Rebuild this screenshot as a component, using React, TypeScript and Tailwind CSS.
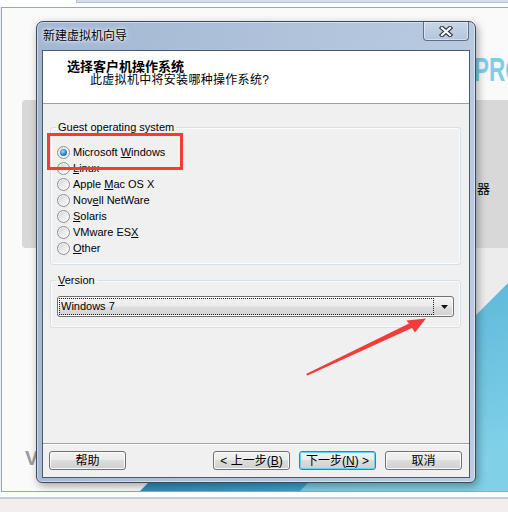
import type { ReactNode } from 'react'

const font = "font-['Liberation_Sans','Noto_Sans_CJK_SC',sans-serif]"

function Radio({ checked, children }: { checked?: boolean; children: ReactNode }) {
  return (
    <div className="flex h-[16px] items-center">
      <span className="flex h-[13px] w-[13px] items-center justify-center rounded-full border border-[#8e8f8f] bg-[linear-gradient(135deg,#cfcfcf,#f4f4f4_70%,#ffffff)] shadow-[inset_0_0_0_1px_#f6f6f6]">
        {checked && (
          <span className="h-[7px] w-[7px] rounded-full bg-[radial-gradient(circle_at_40%_35%,#a8dbf8,#2f80c4_55%,#174a82)]" />
        )}
      </span>
      <span className="ml-[3px] text-[11px] leading-[13px] text-black">{children}</span>
    </div>
  )
}

function Key({ children }: { children: ReactNode }) {
  return <span className="underline underline-offset-[1px]">{children}</span>
}

function Button({ children, focused }: { children: ReactNode; focused?: boolean }) {
  return (
    <button
      className={
        focused
          ? 'flex h-[19px] w-[77px] items-center justify-center rounded-[3px] border border-[#3c7fb1] bg-[linear-gradient(#f2f2f2,#ebebeb_45%,#dddddd_50%,#cfcfcf)] text-[12px] leading-none text-black shadow-[inset_0_0_0_1px_#62d2fa]'
          : 'flex h-[19px] w-[77px] items-center justify-center rounded-[3px] border border-[#707070] bg-[linear-gradient(#f2f2f2,#ebebeb_45%,#dddddd_50%,#cfcfcf)] text-[12px] leading-none text-black shadow-[inset_0_0_0_1px_#fbfbfb]'
      }
    >
      {children}
    </button>
  )
}

function Dialog() {
  return (
    <div className="absolute left-[36px] top-[21px] flex h-[462px] w-[440px] flex-col rounded-t-[7px] rounded-b-[6px] border border-[#3e4a5a] bg-[linear-gradient(100deg,#a2b7d3,#b3c5dc_60%,#bccde2)] px-[5px] pb-[4px] shadow-[2px_3px_9px_rgba(0,0,0,0.35),inset_0_0_0_1px_rgba(255,255,255,0.45)]">
      {/* title bar */}
      <div className="flex h-[28px] items-start">
        <span className="mt-[7px] pl-[1px] text-[12px] leading-[14px] text-black [text-shadow:0_0_6px_#fff,0_0_3px_#fff]">
          新建虚拟机向导
        </span>
        <div className="ml-auto mr-[1px] flex h-[19px] w-[46px] items-center justify-center rounded-b-[4px] border border-t-0 border-[#5f6f85] bg-[linear-gradient(#c9d6e7,#b4c5dc)] shadow-[inset_0_0_0_1px_rgba(255,255,255,0.45)]">
          <svg width="14" height="11" viewBox="0 0 14 11">
            <path d="M3 2 L11 9 M11 2 L3 9" stroke="#2f3a48" strokeWidth="4.4" strokeLinecap="square" />
            <path d="M3 2 L11 9 M11 2 L3 9" stroke="#ffffff" strokeWidth="2.2" strokeLinecap="square" />
          </svg>
        </div>
      </div>

      {/* client area */}
      <div className="flex h-[428px] flex-col border border-[#4b596b] bg-[#f0f0f0]">
        <div className="h-[53px] border-b border-[#a0a0a0] bg-white pl-[24px] pt-[8px]">
          <p className="text-[13px] font-bold leading-[15px] text-black">选择客户机操作系统</p>
          <p className="ml-[23px] text-[12px] leading-[13px] tracking-[0.3px] text-black">
            此虚拟机中将安装哪种操作系统?
          </p>
        </div>

        <div className="flex-1 px-[7px] pr-[8px] pt-[17px]">
          <fieldset className="rounded-[3px] border border-[#d5dfe5] pb-[8px] shadow-[inset_0_0_0_1px_#fafcfd]">
            <legend className="ml-[5px] px-[2px] text-[11px] leading-[12px] text-black">
              Guest operating system
            </legend>
            <div className="mt-[11px] pl-[6px]">
              <Radio checked>
                Microsoft <Key>W</Key>indows
              </Radio>
              <Radio>
                <Key>L</Key>inux
              </Radio>
              <Radio>
                Apple <Key>M</Key>ac OS X
              </Radio>
              <Radio>
                Nov<Key>e</Key>ll NetWare
              </Radio>
              <Radio>
                <Key>S</Key>olaris
              </Radio>
              <Radio>
                VMware ES<Key>X</Key>
              </Radio>
              <Radio>
                <Key>O</Key>ther
              </Radio>
            </div>
          </fieldset>

          <fieldset className="mt-[9px] rounded-[3px] border border-[#d5dfe5] pb-[10px] shadow-[inset_0_0_0_1px_#fafcfd]">
            <legend className="ml-[5px] px-[2px] text-[11px] leading-[12px] text-black">
              <Key>V</Key>ersion
            </legend>
            <div className="mx-[6px] mt-[10px] flex h-[21px] rounded-[3px] border border-[#707070] bg-[linear-gradient(#f3f3f3,#ebebeb_48%,#dedede_52%,#d2d2d2)] shadow-[inset_0_0_0_1px_#f8f8f8]">
              <div className="m-[1px] flex flex-1 items-center border border-dotted border-[#202020] pl-[1px] text-[11px] leading-none text-black">
                Windows 7
              </div>
              <div className="flex w-[18px] items-center justify-center">
                <svg width="7" height="4" viewBox="0 0 7 4">
                  <path d="M0 0 H7 L3.5 4 Z" fill="#111" />
                </svg>
              </div>
            </div>
          </fieldset>
        </div>

        <div className="flex h-[34px] items-center border-t border-[#a0a0a0] pl-[6px] pr-[7px] shadow-[inset_0_1px_0_#ffffff]">
          <Button>帮助</Button>
          <div className="ml-auto flex gap-[9px]">
            <Button>
              &lt; 上一步(<Key>B</Key>)
            </Button>
            <Button focused>
              下一步(<Key>N</Key>) &gt;
            </Button>
            <Button>取消</Button>
          </div>
        </div>
      </div>

      {/* red highlight box */}
      <div className="absolute left-[10px] top-[111px] h-[37px] w-[136px] border-[3px] border-[#f23b3b]" />
    </div>
  )
}

export default function App() {
  return (
    <div className={`relative flex h-[512px] w-[508px] flex-col overflow-hidden bg-[#f1eeed] ${font}`}>
      {/* desktop window behind the wizard */}
      <div className="h-[7px] bg-white">
        <div className="ml-[76px] h-[3px] border-b border-l border-[#b2bfd3] bg-[#d6dcea]" />
      </div>
      <div className="ml-[1px] h-[485px] border-b border-l border-t border-[#8ea8c4] bg-[#fafafa]" />
      <div className="h-[5px] bg-white" />
      <div className="h-[2px] bg-[#c6cbdc]" />

      {/* background app content */}
      <div className="absolute left-[22px] top-[100px] h-[148px] w-[500px] rounded-[4px] bg-[#d8d8d8]" />
      <div className="absolute left-[470px] top-[248px] h-[243px] w-[38px] bg-[#ececec]" />
      <span className="absolute left-[474px] top-[52px] origin-left scale-x-[0.68] text-[33px] font-bold leading-[36px] text-[#7dcfe9]">
        PRO
      </span>
      <span className="absolute left-[477px] top-[181px] text-[13px] leading-[16px] text-black">器</span>
      <span className="absolute left-[25px] top-[446px] text-[20px] font-bold leading-[24px] text-[#9c9c9c]">V</span>
      <svg className="absolute left-0 top-0" width="508" height="512" viewBox="0 0 508 512">
        <defs>
          <linearGradient id="band" x1="0" x2="1" y1="0" y2="0">
            <stop offset="0" stopColor="#2f8fbb" />
            <stop offset="1" stopColor="#3aa6cf" />
          </linearGradient>
          <linearGradient id="tri" x1="0" x2="0.3" y1="0" y2="1">
            <stop offset="0" stopColor="#55b2d6" />
            <stop offset="1" stopColor="#80d0e8" />
          </linearGradient>
        </defs>
        <polygon points="140,491 148,483 320,483 320,491" fill="url(#band)" />
        <polygon points="300,491 508,283 508,491" fill="url(#tri)" />
      </svg>

      <Dialog />

      {/* red arrow pointing at the dropdown */}
      <svg className="absolute left-0 top-0" width="508" height="512" viewBox="0 0 508 512">
        <polygon
          points="306,374 409,323.5 406.5,320.5 426,318.5 415,332.5 412,328 307.5,375.5"
          fill="#f23b3b"
        />
      </svg>
    </div>
  )
}
